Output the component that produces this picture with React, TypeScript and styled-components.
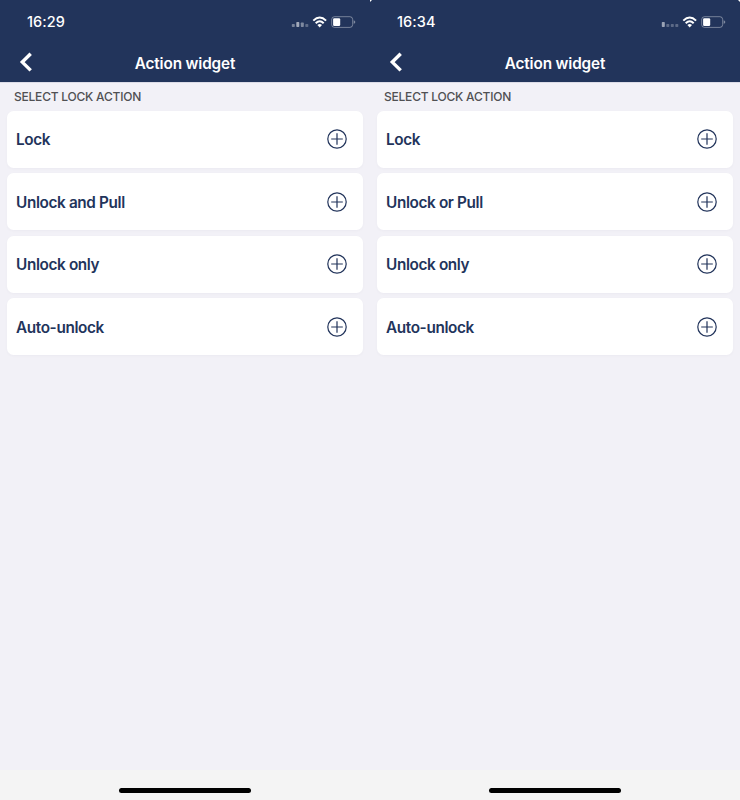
import React from "react";
import styled, { createGlobalStyle } from "styled-components";

const NAVY = "#22345b";

const GlobalStyle = createGlobalStyle`
  * { box-sizing: border-box; }
  body { margin: 0; background: #f2f1f7; font-family: Inter, "Liberation Sans", sans-serif; }
`;

const Page = styled.main`
  display: grid;
  grid-template-columns: 370px 370px;
  width: 740px;
  height: 800px;
  overflow: hidden;
`;

const Phone = styled.section`
  display: flex;
  flex-direction: column;
  height: 800px;
  background: #f2f1f7;
`;

const Header = styled.header`
  position: relative;
  height: 82px;
  flex: none;
  background: ${NAVY};
  color: #fff;
  box-shadow: 0 1px 0 #dcdce7;
`;

const StatusBar = styled.div`
  display: flex;
  justify-content: space-between;
  height: 44px;
  padding: 0 14px 0 27px;
`;

const Time = styled.time`
  font-size: 14.5px;
  line-height: 18px;
  font-weight: 500;
  letter-spacing: 0.08px;
  white-space: nowrap;
  padding-top: 13px;
`;

const StatusIcons = styled.svg`
  display: block;
  width: 66px;
  height: 44px;
`;

const NavBar = styled.div`
  display: grid;
  grid-template-columns: 52px 1fr 52px;
  height: 38px;
`;

const BackButton = styled.button`
  padding: 0;
  border: 0;
  background: none;
  color: #fff;
  height: 38px;
`;

const BackIcon = styled.svg`
  display: block;
  width: 52px;
  height: 38px;
`;

const Title = styled.h1`
  margin: 0;
  padding-top: 10px;
  text-align: center;
  font-size: 15.3px;
  line-height: 20px;
  font-weight: 600;
  letter-spacing: -0.14px;
`;

const Content = styled.div`
  flex: 1;
  padding: 0 7px;
`;

const SectionLabel = styled.h2`
  margin: 0;
  height: 28.7px;
  padding: 7px 0 0 7px;
  color: #505053;
  font-size: 12px;
  line-height: 16px;
  font-weight: 500;
  letter-spacing: -0.22px;
`;

const ActionList = styled.div`
  display: flex;
  flex-direction: column;
  gap: 5.2px;
`;

const ActionRow = styled.button`
  display: flex;
  align-items: center;
  justify-content: space-between;
  width: 356px;
  height: 57.3px;
  padding: 0 16px 0 9px;
  border: 0;
  border-radius: 6.5px;
  background: #fff;
  box-shadow: 0 1px 3px rgba(40, 35, 70, 0.03);
  color: ${NAVY};
  font: 600 15.3px/20px Inter, "Liberation Sans", sans-serif;
  letter-spacing: -0.36px;
`;

const ActionName = styled.span`
  padding-top: 2px;
`;

const PlusIcon = styled.svg`
  display: block;
  width: 20px;
  height: 20px;
`;

const HomeArea = styled.footer`
  display: flex;
  justify-content: center;
  height: 30.5px;
  padding-top: 18.5px;
  background: #f4f4f4;
`;

const HomeIndicator = styled.div`
  width: 132px;
  height: 4.6px;
  border-radius: 3px;
  background: #000;
`;

const CornerNotch = styled.svg<{ $side: "left" | "right" }>`
  position: absolute;
  top: 0;
  ${(p) => p.$side}: 0;
  width: 2px;
  height: 2px;
`;

type Bar = { height: number; opacity: number };
type Screen = { time: string; bars: Bar[]; actions: string[] };

const screens: Screen[] = [
  {
    time: "16:29",
    bars: [
      { height: 3, opacity: 0.38 },
      { height: 5, opacity: 0.58 },
      { height: 4.5, opacity: 0.42 },
      { height: 3, opacity: 0.28 },
    ],
    actions: ["Lock", "Unlock and Pull", "Unlock only", "Auto-unlock"],
  },
  {
    time: "16:34",
    bars: [
      { height: 5, opacity: 0.55 },
      { height: 3, opacity: 0.27 },
      { height: 3, opacity: 0.27 },
      { height: 3, opacity: 0.27 },
    ],
    actions: ["Lock", "Unlock or Pull", "Unlock only", "Auto-unlock"],
  },
];

function Status({ bars }: { bars: Bar[] }) {
  return (
    <StatusIcons viewBox="0 0 66 44" aria-hidden="true">
      {bars.map((bar, i) => (
        <rect key={i} x={1.8 + i * 4.5} y={27 - bar.height} width="3" height={bar.height} rx="0.7" fill="#fff" opacity={bar.opacity} />
      ))}
      <g fill="none" stroke="#fff" strokeWidth="2">
        <path d="M23.3 20.6 Q29.7 14.4 36.1 20.6" />
        <path d="M25.7 23.2 Q29.7 19.4 33.7 23.2" />
      </g>
      <path d="M27.4 25 Q29.7 23.2 32 25 L29.7 27.4 Z" fill="#fff" />
      <rect x="41.7" y="16.7" width="21" height="10.7" rx="2.8" fill="none" stroke="#fff" strokeOpacity="0.38" />
      <rect x="43.1" y="18.2" width="7.1" height="7.7" rx="1.2" fill="#fff" />
      <path d="M63.7 20.2 Q65.3 20.6 65.3 22 Q65.3 23.4 63.7 23.8 Z" fill="#fff" opacity="0.42" />
    </StatusIcons>
  );
}

function PhoneScreen({ screen, second }: { screen: Screen; second: boolean }) {
  return (
    <Phone>
      <Header>
        <StatusBar>
          <Time>{screen.time}</Time>
          <Status bars={screen.bars} />
        </StatusBar>
        <NavBar>
          <BackButton aria-label="Back">
            <BackIcon viewBox="0 0 52 38">
              <path d="M30.7 9.8 L22.3 18.1 L30.7 26.4" fill="none" stroke="currentColor" strokeWidth="3.4" />
            </BackIcon>
          </BackButton>
          <Title>Action widget</Title>
        </NavBar>
        {second && (
          <>
            <CornerNotch $side="left" viewBox="0 0 2 2">
              <path d="M0 0 H2 L0 2 Z" fill="#fff" />
            </CornerNotch>
            <CornerNotch $side="right" viewBox="0 0 2 2">
              <path d="M0 0 H2 V2 Z" fill="#fff" />
            </CornerNotch>
          </>
        )}
      </Header>
      <Content>
        <SectionLabel>SELECT LOCK ACTION</SectionLabel>
        <ActionList>
          {screen.actions.map((action) => (
            <ActionRow key={action}>
              <ActionName>{action}</ActionName>
              <PlusIcon viewBox="0 0 20 20" fill="none" stroke={NAVY} strokeWidth="1.2">
                <circle cx="10" cy="10" r="9.2" />
                <path d="M4.2 10 H15.8 M10 4.2 V15.8" />
              </PlusIcon>
            </ActionRow>
          ))}
        </ActionList>
      </Content>
      <HomeArea>
        <HomeIndicator />
      </HomeArea>
    </Phone>
  );
}

export default function App() {
  return (
    <>
      <GlobalStyle />
      <Page>
        {screens.map((screen, i) => (
          <PhoneScreen key={screen.time} screen={screen} second={i === 1} />
        ))}
      </Page>
    </>
  );
}
